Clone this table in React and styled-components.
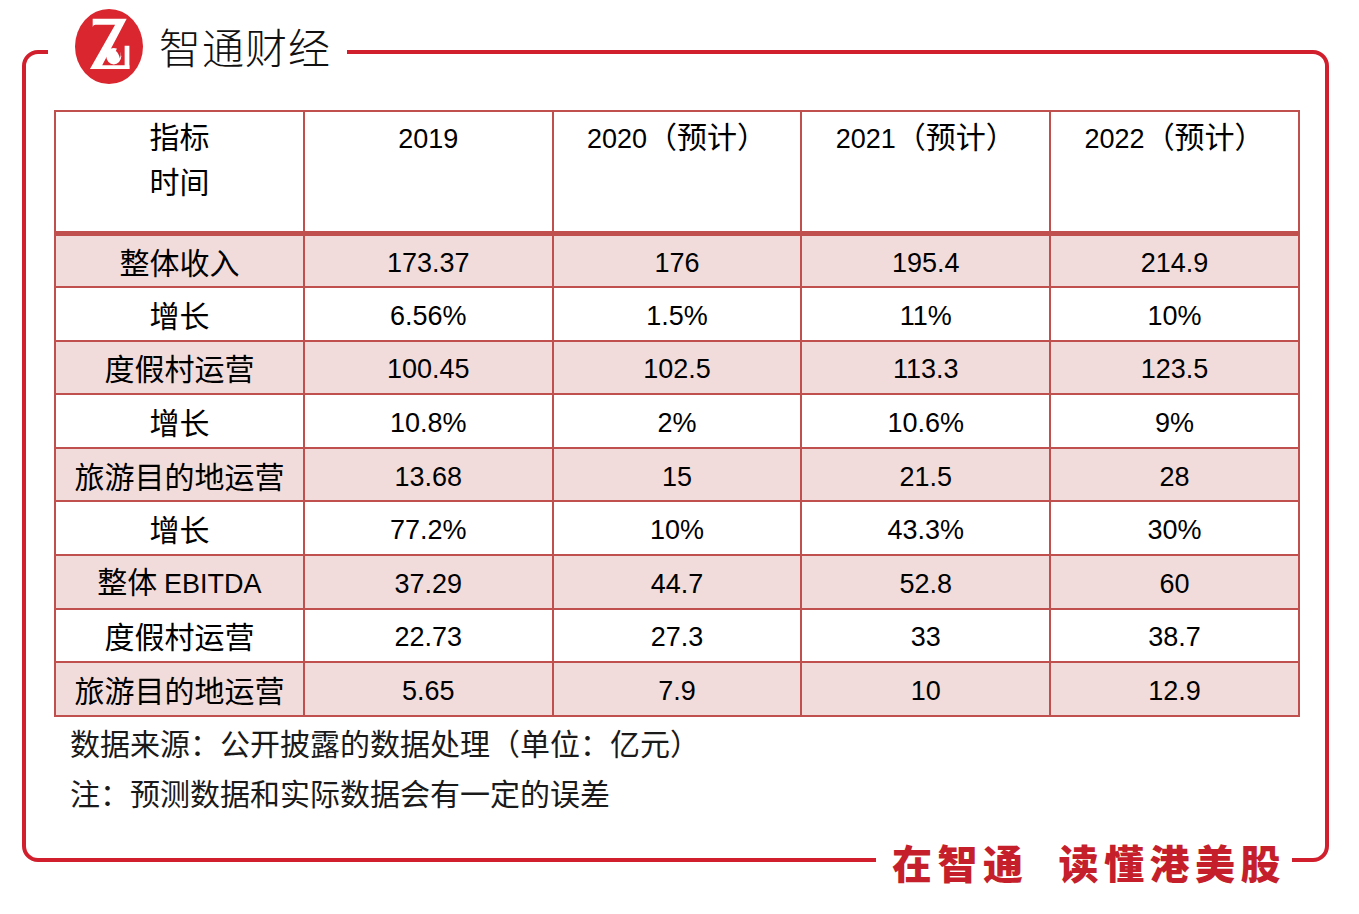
import React from "react";
import styled, { createGlobalStyle } from "styled-components";

const GlobalStyle = createGlobalStyle`
  body {
    margin: 0;
    background: #fff;
    font-family: "Liberation Sans", "Noto Sans CJK SC", sans-serif;
  }
`;

const RED = "#d21f2d";
const LINE = "#c0504d";
const PINK = "#f2dcdb";

const rows = [
  { label: "整体收入", vals: ["173.37", "176", "195.4", "214.9"], fill: true },
  { label: "增长", vals: ["6.56%", "1.5%", "11%", "10%"] },
  { label: "度假村运营", vals: ["100.45", "102.5", "113.3", "123.5"], fill: true },
  { label: "增长", vals: ["10.8%", "2%", "10.6%", "9%"] },
  { label: "旅游目的地运营", vals: ["13.68", "15", "21.5", "28"], fill: true },
  { label: "增长", vals: ["77.2%", "10%", "43.3%", "30%"] },
  { label: "整体", latin: "EBITDA", vals: ["37.29", "44.7", "52.8", "60"], fill: true },
  { label: "度假村运营", vals: ["22.73", "27.3", "33", "38.7"] },
  { label: "旅游目的地运营", vals: ["5.65", "7.9", "10", "12.9"], fill: true },
];

export default function App() {
  return (
    <>
      <GlobalStyle />
      <Page>
        <Frame>
          <Brand>
            <Logo />
            <BrandName>智通财经</BrandName>
          </Brand>

          <Table>
            <thead>
              <tr>
                <Th>
                  指标
                  <br />
                  时间
                </Th>
                <Th>
                  <Num>2019</Num>
                </Th>
                <Th>
                  <Num>2020</Num>（预计）
                </Th>
                <Th>
                  <Num>2021</Num>（预计）
                </Th>
                <Th>
                  <Num>2022</Num>（预计）
                </Th>
              </tr>
            </thead>
            <tbody>
              {rows.map((r, i) => (
                <Row key={i} $fill={r.fill}>
                  <Td>
                    {r.label}
                    {r.latin && (
                      <>
                        {" "}
                        <Num>{r.latin}</Num>
                      </>
                    )}
                  </Td>
                  {r.vals.map((v, j) => (
                    <Td key={j}>
                      <Num>{v}</Num>
                    </Td>
                  ))}
                </Row>
              ))}
            </tbody>
          </Table>

          <Notes>
            <p>数据来源：公开披露的数据处理（单位：亿元）</p>
            <p>注：预测数据和实际数据会有一定的误差</p>
          </Notes>

          <Slogan>
            <span>在智通</span>
            <span>读懂港美股</span>
          </Slogan>
        </Frame>
      </Page>
    </>
  );
}

function Logo() {
  return (
    <LogoSvg viewBox="0 0 100 100" preserveAspectRatio="none">
      <ellipse cx="50" cy="50" rx="50" ry="50" fill="#d9262f" />
      <path d="M26 13 H76 L40 75 H80 V80 H22 L59 21 H30 Q27 21 26 24 Z" fill="#fff" />
      <circle cx="57" cy="63" r="11" fill="#fff" />
      <path d="M62 52 Q70 56 66 66 Q64 58 60 56 Z" fill="#d9262f" />
      <rect x="73" y="49" width="7" height="31" fill="#fff" />
    </LogoSvg>
  );
}

const Page = styled.div`
  padding: 50px 30px 40px 22px;
`;

const Frame = styled.div`
  position: relative;
  box-sizing: border-box;
  width: 1307px;
  height: 812px;
  border: 4px solid ${RED};
  border-radius: 16px;
  padding: 56px 25px 0 28px;
`;

const Brand = styled.div`
  position: absolute;
  top: -48px;
  left: 22px;
  width: 299px;
  height: 80px;
  box-sizing: border-box;
  padding-left: 27px;
  background: #fff;
  display: flex;
  align-items: center;
  gap: 16px;
`;

const LogoSvg = styled.svg`
  width: 68px;
  height: 75px;
  flex: none;
`;

const BrandName = styled.span`
  font-family: "Noto Sans CJK SC", sans-serif;
  font-size: 42px;
  font-weight: 300;
  letter-spacing: 1px;
  color: #111;
  line-height: 1;
`;

const Table = styled.table`
  width: 1246px;
  border-collapse: collapse;
  table-layout: fixed;
  color: #000;
  font-family: "Noto Sans CJK SC", sans-serif;
  font-size: 30px;
`;

const Th = styled.th`
  height: 118px;
  padding: 1px 0 0;
  vertical-align: top;
  font-weight: normal;
  line-height: 45px;
  text-align: center;
  border: 2px solid ${LINE};
  border-bottom: 5px solid ${LINE};
`;

const Row = styled.tr`
  height: 53.6px;
  background: ${(p) => (p.$fill ? PINK : "#fff")};
`;

const Td = styled.td`
  padding: 0;
  text-align: center;
  vertical-align: middle;
  line-height: 40px;
  border: 2px solid ${LINE};
`;

const Num = styled.span`
  font-family: "Liberation Sans", sans-serif;
  font-size: 27px;
`;

const Notes = styled.div`
  padding: 0 0 0 16px;
  font-family: "Noto Sans CJK SC", sans-serif;
  font-size: 30px;
  line-height: 50px;
  color: #1a1a1a;
  p {
    margin: 0;
  }
`;

const Slogan = styled.div`
  position: absolute;
  right: 33px;
  bottom: -30px;
  padding: 0 6px 0 16px;
  background: #fff;
  display: flex;
  gap: 30px;
  font-family: "Noto Sans CJK SC", sans-serif;
  font-size: 40px;
  font-weight: 900;
  letter-spacing: 5.5px;
  line-height: 52px;
  color: #c51f2c;
`;
